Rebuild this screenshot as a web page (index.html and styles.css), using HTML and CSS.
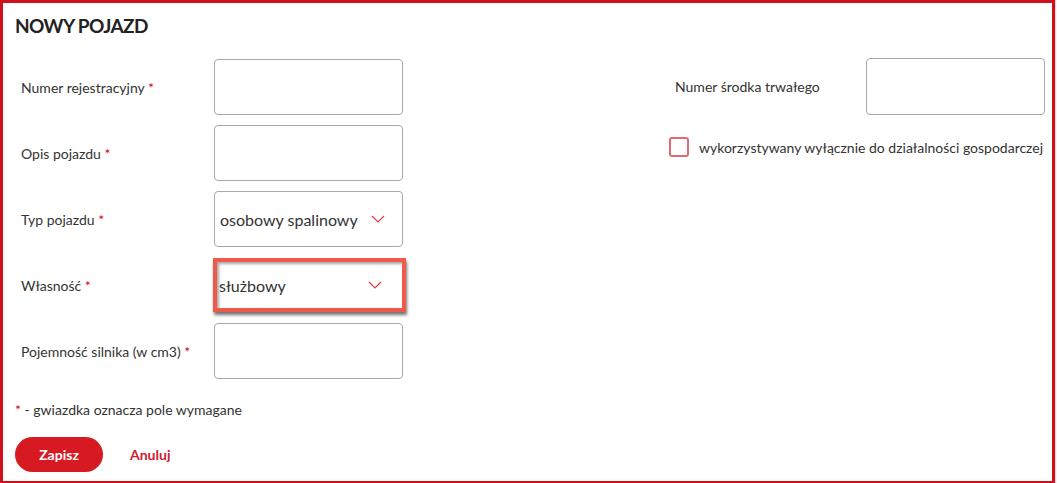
FILE: index.html
```html
<!DOCTYPE html>
<html lang="pl">
<head>
<meta charset="utf-8">
<title>Nowy pojazd</title>
<link rel="stylesheet" href="styles.css">
</head>
<body>
<div class="frame">
  <h1 class="title">NOWY POJAZD</h1>
  <div class="columns">
    <div class="col-left">
      <div class="row">
        <label class="label">Numer rejestracyjny <span class="req">*</span></label>
        <div class="input"></div>
      </div>
      <div class="row">
        <label class="label">Opis pojazdu <span class="req">*</span></label>
        <div class="input"></div>
      </div>
      <div class="row">
        <label class="label">Typ pojazdu <span class="req">*</span></label>
        <div class="input select"><span>osobowy spalinowy</span>
          <svg class="chev" width="14" height="8" viewBox="0 0 14 8"><path d="M1 1 L7 7 L13 1" fill="none" stroke="#e0394a" stroke-width="1.2"/></svg>
        </div>
      </div>
      <div class="row">
        <label class="label">Własność <span class="req">*</span></label>
        <div class="input select highlight"><span>służbowy</span>
          <svg class="chev" width="14" height="8" viewBox="0 0 14 8"><path d="M1 1 L7 7 L13 1" fill="none" stroke="#e0394a" stroke-width="1.2"/></svg>
        </div>
      </div>
      <div class="row">
        <label class="label">Pojemność silnika (w cm3) <span class="req">*</span></label>
        <div class="input"></div>
      </div>
    </div>
    <div class="col-right">
      <div class="row row-right">
        <label class="label">Numer środka trwałego</label>
        <div class="input input-right"></div>
      </div>
      <div class="check-row">
        <span class="checkbox"></span>
        <span class="check-text">wykorzystywany wyłącznie do działalności gospodarczej</span>
      </div>
    </div>
  </div>
  <p class="note"><span class="req">*</span> - gwiazdka oznacza pole wymagane</p>
  <div class="actions">
    <button class="btn-save">Zapisz</button>
    <a class="btn-cancel">Anuluj</a>
  </div>
</div>
</body>
</html>
```

FILE: styles.css
```css
* { box-sizing: border-box; }
html, body { margin: 0; padding: 0; background: #fff; }
body {
  font-family: Lato, "Open Sans", sans-serif;
  color: #333;
}
.frame {
  width: 1055px;
  height: 483px;
  border: 3px solid #d0111b;
  border-bottom-width: 2px;
  padding: 0 12px;
  box-shadow: 1px 0 1px rgba(0,0,0,0.15);
}
.title {
  margin: 0;
  padding-top: 11px;
  font-size: 19px;
  line-height: 24px;
  font-weight: 700;
  color: #222;
  letter-spacing: -0.6px;
}
.columns {
  display: flex;
  margin-top: 21px;
}
.col-left {
  width: 654px;
  flex: 0 0 654px;
  display: flex;
  flex-direction: column;
  gap: 10px;
}
.col-right {
  flex: 1;
}
.row {
  display: flex;
  align-items: center;
  height: 56px;
}
.label {
  width: 199px;
  flex: 0 0 auto;
  padding-left: 6px;
  font-size: 14px;
  color: #333;
}
.req { color: #d0021b; }
.input {
  width: 189px;
  height: 56px;
  flex: 0 0 auto;
  border: 1px solid #a9a9a9;
  border-radius: 4px;
  background: #fff;
}
.select {
  display: flex;
  align-items: center;
  justify-content: space-between;
  padding: 0 17px 0 5px;
  font-size: 16px;
  color: #333;
}
.chev { display: block; }
.highlight {
  width: 193px;
  height: 54px;
  margin-left: -1px;
  border: 4px solid #f0584c;
  border-radius: 0;
  padding-left: 2px;
  padding-right: 20px;
  box-shadow: 1px 3px 3px rgba(0,0,0,0.55), inset 2px 2px 3px rgba(0,0,0,0.35);
}
.row-right { height: 57px; margin-top: -1px; }
.row-right .label { width: 197px; }
.input-right { width: 179px; height: 57px; }
.check-row {
  display: flex;
  align-items: center;
  margin-top: 22px;
  gap: 10px;
  white-space: nowrap;
}
.checkbox {
  width: 20px;
  height: 20px;
  flex: 0 0 auto;
  border: 2px solid #e36a74;
  border-radius: 3px;
}
.check-text { font-size: 14px; color: #333; }
.note {
  margin: 22px 0 0 0;
  font-size: 14px;
  line-height: 18px;
}
.actions {
  display: flex;
  align-items: center;
  margin-top: 18px;
}
.btn-save {
  width: 88px;
  height: 35px;
  border: none;
  border-radius: 18px;
  background: #d71a21;
  color: #fff;
  font-family: Lato, sans-serif;
  font-weight: 700;
  font-size: 14px;
}
.btn-cancel {
  margin-left: 27px;
  color: #d2202f;
  font-weight: 700;
  font-size: 14px;
}
```
